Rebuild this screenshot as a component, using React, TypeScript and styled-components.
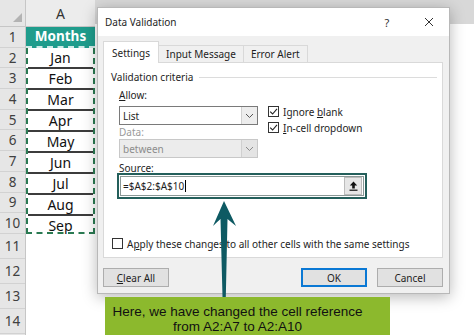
import React from 'react'
import styled, { createGlobalStyle } from 'styled-components'

const UI_FONT = `'Noto Sans', 'DejaVu Sans', sans-serif`

const GlobalStyle = createGlobalStyle`
  html, body { margin: 0; padding: 0; background: #fff; }
  #root { width: 474px; height: 335px; overflow: hidden; }
`

const Screen = styled.div`
  display: flex;
  width: 474px;
  height: 335px;
  overflow: hidden;
  font-family: ${UI_FONT};
  color: #1e1e1e;
`

/* ---------- sheet ---------- */

const Sheet = styled.div`
  display: flex;
  flex: none;
  width: 95px;
`

const RowHeaders = styled.div`
  display: flex;
  flex-direction: column;
  width: 26px;
  box-sizing: border-box;
  background: #e6e6e6;
  border-right: 1px solid #c6c6c6;
`

const Corner = styled.div`
  height: 27px;
  box-sizing: border-box;
  border-bottom: 1px solid #c6c6c6;
  display: flex;
  align-items: flex-end;
  justify-content: flex-end;
  padding: 0 3px 4px 0;
`

const RowNum = styled.div<{ $h: number }>`
  height: ${p => p.$h}px;
  box-sizing: border-box;
  border-bottom: 1px solid #d2d2d2;
  display: flex;
  align-items: center;
  justify-content: center;
  font-size: 13.5px;
  color: #404040;
`

const ColumnA = styled.div`
  display: flex;
  flex-direction: column;
  width: 69px;
`

const ColHead = styled.div`
  height: 27px;
  box-sizing: border-box;
  background: #ececec;
  border-bottom: 1px solid #c6c6c6;
  display: flex;
  align-items: center;
  justify-content: center;
  font-size: 14px;
  color: #333;
`

const HeadCell = styled.div`
  height: 20.7px;
  box-sizing: border-box;
  background: #1f9c8c;
  border-bottom: 2px dashed rgba(255, 255, 255, 0.8);
  display: flex;
  align-items: center;
  justify-content: center;
  color: #fff;
  font-weight: 700;
  font-size: 13.5px;
`

const Range = styled.div`
  height: 186.3px;
  box-sizing: border-box;
  display: flex;
  flex-direction: column;
  border: 2px dashed #2a7a52;
  border-top: none;
`

const DataCell = styled.div`
  flex: 1;
  display: flex;
  align-items: center;
  justify-content: center;
  font-size: 14px;
  color: #111;
  & + & {
    border-top: 2px solid #3c3c3c;
  }
`

const EmptyCell = styled.div`
  height: 25px;
  background: #fff;
`

/* ---------- dialog ---------- */

const Stage = styled.div`
  position: relative;
  flex: 1;
  display: flex;
  flex-direction: column;
  align-items: flex-start;
  padding: 7px 0 0 2px;
  background: linear-gradient(#d8d8d8 0, #d8d8d8 24px, #fff 24px);
`

const Dialog = styled.div`
  width: 353px;
  box-sizing: border-box;
  border: 1px solid #b8b8b8;
  background: #f0f0f0;
  box-shadow: 0 3px 14px rgba(0, 0, 0, 0.28);
  display: flex;
  flex-direction: column;
`

const TitleBar = styled.div`
  height: 28px;
  background: #fff;
  display: flex;
  align-items: center;
  padding-left: 7px;
  font-size: 10px;
`

const Title = styled.span`
  flex: 1;
`

const TitleButton = styled.span<{ $w: number }>`
  width: ${p => p.$w}px;
  height: 28px;
  display: flex;
  align-items: center;
  justify-content: center;
  font-size: 11px;
  color: #333;
`

const Body = styled.div`
  display: flex;
  flex-direction: column;
  padding: 5px 6px 6px 5px;
`

const Tabs = styled.div`
  display: flex;
  align-items: flex-end;
  height: 22px;
  margin-bottom: -1px;
`

const Tab = styled.div<{ $active?: boolean }>`
  box-sizing: border-box;
  height: ${p => (p.$active ? 22 : 18)}px;
  padding: 0 ${p => (p.$active ? 8 : 7)}px;
  margin-left: ${p => (p.$active ? 0 : -1)}px;
  display: flex;
  align-items: center;
  background: ${p => (p.$active ? '#fff' : '#f0f0f0')};
  border: 1px solid #d9d9d9;
  border-bottom: ${p => (p.$active ? 'none' : '1px solid #d9d9d9')};
  position: relative;
  z-index: ${p => (p.$active ? 2 : 1)};
  font-size: 10px;
`

const Panel = styled.div`
  height: 196px;
  box-sizing: border-box;
  background: #fff;
  border: 1px solid #d9d9d9;
  display: flex;
  flex-direction: column;
`

const Legend = styled.div`
  display: flex;
  align-items: center;
  margin-top: 7px;
  padding-left: 7px;
  height: 14px;
  font-size: 10px;
  &::after {
    content: '';
    flex: 1;
    height: 1px;
    margin: 0 5px 0 6px;
    background: #dcdcdc;
  }
`

const Criteria = styled.div`
  display: flex;
  flex-direction: column;
  padding-left: 15px;
  margin-top: 4px;
`

const Label = styled.div<{ $disabled?: boolean }>`
  height: 14px;
  line-height: 14px;
  font-size: 10px;
  color: ${p => (p.$disabled ? '#9a9a9a' : '#1e1e1e')};
`

const AllowRow = styled.div`
  display: flex;
  align-items: flex-start;
  gap: 10px;
  height: 19px;
  margin-top: 4px;
`

const Combo = styled.div<{ $disabled?: boolean }>`
  width: 139px;
  height: 19px;
  flex: none;
  box-sizing: border-box;
  display: flex;
  border: 1px solid ${p => (p.$disabled ? '#c8c8c8' : '#7a7a7a')};
  background: ${p => (p.$disabled ? '#ececec' : '#fff')};
  color: ${p => (p.$disabled ? '#8c8c8c' : '#1e1e1e')};
  font-size: 10px;
`

const ComboText = styled.span`
  flex: 1;
  display: flex;
  align-items: center;
  padding-left: 3px;
`

const ComboArrow = styled.span<{ $disabled?: boolean }>`
  width: 15px;
  display: flex;
  align-items: center;
  justify-content: center;
  background: ${p => (p.$disabled ? '#e4e4e4' : '#ededed')};
  border-left: 1px solid #d0d0d0;
`

const Checks = styled.div`
  display: flex;
  flex-direction: column;
  gap: 5px;
  margin-top: 0;
`

const CheckRow = styled.label`
  display: flex;
  align-items: center;
  gap: 4px;
  height: 11px;
  font-size: 10px;
  white-space: nowrap;
`

const Box = styled.span`
  width: 11px;
  height: 11px;
  box-sizing: border-box;
  border: 1px solid #333;
  background: #fff;
  display: inline-flex;
  align-items: center;
  justify-content: center;
  flex: none;
`

const SourceLabel = styled(Label)`
  height: 12px;
  line-height: 12px;
  margin-top: 4px;
`

const SourceFrame = styled.div`
  width: 250px;
  height: 26px;
  box-sizing: border-box;
  margin: -1px 0 0 -2px;
  border: 2px solid #245f5b;
  padding: 1px;
  display: flex;
`

const SourceField = styled.div`
  flex: 1;
  border: 1px solid #8a9896;
  display: flex;
  align-items: center;
  padding-left: 2px;
  font-size: 10px;
`

const SourceValue = styled.span`
  flex: 1;
  display: flex;
  align-items: center;
  &::after {
    content: '';
    width: 1px;
    height: 12px;
    background: #000;
    margin-left: 1px;
  }
`

const PickButton = styled.span`
  width: 18px;
  height: 18px;
  margin-right: 1px;
  box-sizing: border-box;
  border: 1px solid #bcbcbc;
  background: #e6e6e6;
  display: flex;
  align-items: center;
  justify-content: center;
`

const ApplyRow = styled(CheckRow)`
  margin-top: auto;
  margin-bottom: 8px;
  padding-left: 8px;
`

const Footer = styled.div`
  display: flex;
  gap: 10px;
  margin-top: 10px;
`

const Button = styled.span<{ $primary?: boolean; $push?: boolean }>`
  width: 66px;
  height: 19px;
  box-sizing: border-box;
  display: flex;
  align-items: center;
  justify-content: center;
  background: #e1e1e1;
  border: ${p => (p.$primary ? '2px solid #0a78d4' : '1px solid #adadad')};
  margin-left: ${p => (p.$push ? 'auto' : '0')};
  font-size: 10px;
`

const Note = styled.div`
  width: 285px;
  height: 38px;
  box-sizing: border-box;
  margin: 3px 0 0 8px;
  padding: 7px 20px 0 0;
  background: #8cb92d;
  font-family: 'Liberation Sans', Arial, sans-serif;
  font-size: 13.5px;
  line-height: 15px;
  text-align: center;
  color: #111;
`

const Pointer = styled.svg`
  position: absolute;
  left: 114px;
  top: 198px;
  z-index: 5;
`

const months = ['Jan', 'Feb', 'Mar', 'Apr', 'May', 'Jun', 'Jul', 'Aug', 'Sep']
const rowHeights = [...Array(10).fill(20.7), 25, 25, 25, 25]

const Check = () => (
  <svg width="9" height="9" viewBox="0 0 9 9">
    <path d="M1.2 4.6 L3.6 7 L8 1.8" fill="none" stroke="#222" strokeWidth="1.1" />
  </svg>
)

const Chevron = ({ color }: { color: string }) => (
  <svg width="9" height="6" viewBox="0 0 9 6">
    <path d="M1 1 L4.5 4.5 L8 1" fill="none" stroke={color} strokeWidth="1" />
  </svg>
)

const App: React.FC = () => (
  <Screen>
    <GlobalStyle />
    <Sheet>
      <RowHeaders>
        <Corner>
          <svg width="9" height="9" viewBox="0 0 9 9">
            <polygon points="9,0 9,9 0,9" fill="#b3b3b3" />
          </svg>
        </Corner>
        {rowHeights.map((h, i) => (
          <RowNum key={i} $h={h}>{i + 1}</RowNum>
        ))}
      </RowHeaders>
      <ColumnA>
        <ColHead>A</ColHead>
        <HeadCell>Months</HeadCell>
        <Range>
          {months.map(m => (
            <DataCell key={m}>{m}</DataCell>
          ))}
        </Range>
        <EmptyCell />
        <EmptyCell />
        <EmptyCell />
        <EmptyCell />
      </ColumnA>
    </Sheet>

    <Stage>
      <Dialog>
        <TitleBar>
          <Title>Data Validation</Title>
          <TitleButton $w={44}>?</TitleButton>
          <TitleButton $w={40}>
            <svg width="10" height="10" viewBox="0 0 10 10">
              <path d="M1 1 L9 9 M9 1 L1 9" stroke="#333" strokeWidth="1" />
            </svg>
          </TitleButton>
        </TitleBar>
        <Body>
          <Tabs>
            <Tab $active>Settings</Tab>
            <Tab>Input Message</Tab>
            <Tab>Error Alert</Tab>
          </Tabs>
          <Panel>
            <Legend>Validation criteria</Legend>
            <Criteria>
              <Label><u>A</u>llow:</Label>
              <AllowRow>
                <Combo>
                  <ComboText>List</ComboText>
                  <ComboArrow><Chevron color="#555" /></ComboArrow>
                </Combo>
                <Checks>
                  <CheckRow>
                    <Box><Check /></Box>
                    <span>Ignore <u>b</u>lank</span>
                  </CheckRow>
                  <CheckRow>
                    <Box><Check /></Box>
                    <span><u>I</u>n-cell dropdown</span>
                  </CheckRow>
                </Checks>
              </AllowRow>
              <Label $disabled>Data:</Label>
              <Combo $disabled>
                <ComboText>between</ComboText>
                <ComboArrow $disabled><Chevron color="#8a8a8a" /></ComboArrow>
              </Combo>
              <SourceLabel><u>S</u>ource:</SourceLabel>
              <SourceFrame>
                <SourceField>
                  <SourceValue>=$A$2:$A$10</SourceValue>
                  <PickButton>
                    <svg width="9" height="10" viewBox="0 0 9 10">
                      <path d="M4.5 0.5 L0.8 4.5 H3.2 V7.5 H5.8 V4.5 H8.2 Z" fill="#111" />
                      <rect x="0.5" y="8.6" width="8" height="1.2" fill="#111" />
                    </svg>
                  </PickButton>
                </SourceField>
              </SourceFrame>
            </Criteria>
            <ApplyRow>
              <Box />
              <span>A<u>p</u>ply these changes to all other cells with the same settings</span>
            </ApplyRow>
          </Panel>
          <Footer>
            <Button><span><u>C</u>lear All</span></Button>
            <Button $primary $push>OK</Button>
            <Button>Cancel</Button>
          </Footer>
        </Body>
      </Dialog>

      <Note>
        Here, we have changed the cell reference
        <br />
        from A2:A7 to A2:A10
      </Note>

      <Pointer width="30" height="102" viewBox="0 0 30 102">
        <path
          d="M15 3 L27 28 Q22 24 18.5 21 L16.8 99 L13.5 99 L11.5 21 Q8 24 4 28 Z"
          fill="#0e5a63"
        />
      </Pointer>
    </Stage>
  </Screen>
)

export default App
